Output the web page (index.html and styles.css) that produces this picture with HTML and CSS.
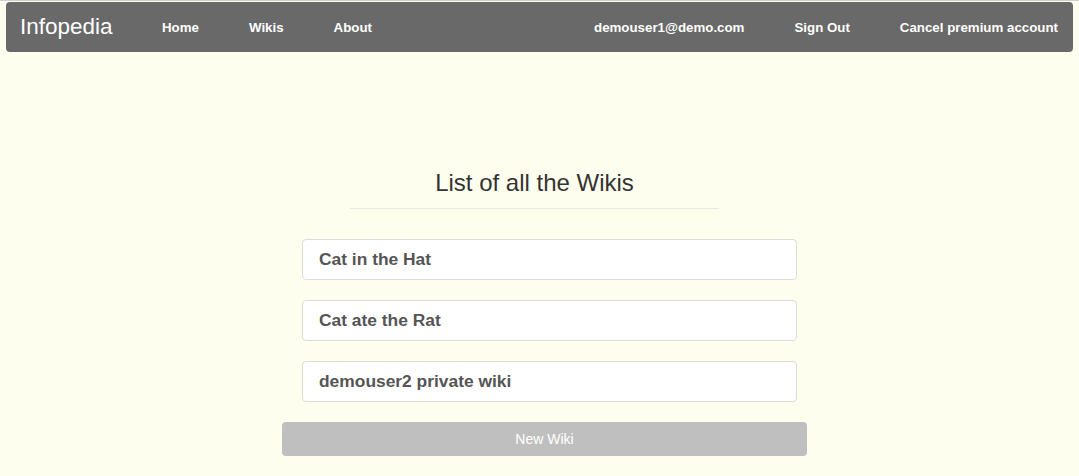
FILE: index.html
```html
<!DOCTYPE html>
<html>
<head>
<meta charset="utf-8">
<link rel="stylesheet" href="styles.css">
</head>
<body>
<nav class="navbar">
  <a class="brand">Infopedia</a>
  <ul class="nav nav-left">
    <li><a>Home</a></li>
    <li><a>Wikis</a></li>
    <li><a>About</a></li>
  </ul>
  <ul class="nav nav-right">
    <li><a>demouser1@demo.com</a></li>
    <li><a>Sign Out</a></li>
    <li><a>Cancel premium account</a></li>
  </ul>
</nav>
<main class="content">
  <div class="heading">
    <h1>List of all the Wikis</h1>
    <hr class="rule">
  </div>
  <div class="list">
    <div class="item">Cat in the Hat</div>
    <div class="item">Cat ate the Rat</div>
    <div class="item">demouser2 private wiki</div>
  </div>
  <button class="btn-new">New Wiki</button>
</main>
</body>
</html>
```
FILE: styles.css
```css
html, body {
  margin: 0;
  padding: 0;
}
body {
  background: #fefeee;
  border-top: 1px solid #cfcfcf;
  font-family: "Liberation Sans", Arial, sans-serif;
  color: #333;
  height: 475px;
  overflow: hidden;
}
.navbar {
  margin: 1px 6px 0 6px;
  height: 50px;
  background: #696969;
  border-radius: 4px;
  display: flex;
  align-items: center;
  color: #fff;
}
.brand {
  font-size: 22.5px;
  font-weight: 300;
  padding-left: 14px;
  width: 92px;
  color: #fff;
}
.nav {
  list-style: none;
  margin: 0;
  padding: 0;
  display: flex;
}
.nav a {
  font-size: 13.3px;
  font-weight: bold;
  color: #fff;
  display: block;
}
.nav-left {
  margin-left: 50px;
  gap: 50px;
}
.nav-right {
  margin-left: auto;
  margin-right: 15px;
  gap: 50px;
}
.content {
  width: 525px;
  margin-left: 282px;
  padding-top: 116px;
}
.heading {
  width: 369px;
  margin-left: 68px;
  text-align: center;
}
h1 {
  margin: 0;
  font-size: 24px;
  font-weight: normal;
  line-height: 30px;
  color: #333;
}
.rule {
  border: 0;
  border-top: 1px solid #e8e8e0;
  margin: 10px 0 0 0;
}
.list {
  margin: 30px 0 0 20px;
  width: 495px;
  display: flex;
  flex-direction: column;
  gap: 20px;
}
.item {
  height: 39px;
  background: #fff;
  border: 1px solid #dcdcd8;
  border-radius: 4px;
  padding: 0 16px;
  font-size: 17.4px;
  font-weight: bold;
  color: #555;
  line-height: 39px;
}
.btn-new {
  display: block;
  margin-top: 20px;
  width: 525px;
  height: 34px;
  background: #bfbfbf;
  border: 0;
  border-radius: 4px;
  color: #fff;
  font-family: "Liberation Sans", Arial, sans-serif;
  font-size: 14px;
  padding: 0;
}
```
